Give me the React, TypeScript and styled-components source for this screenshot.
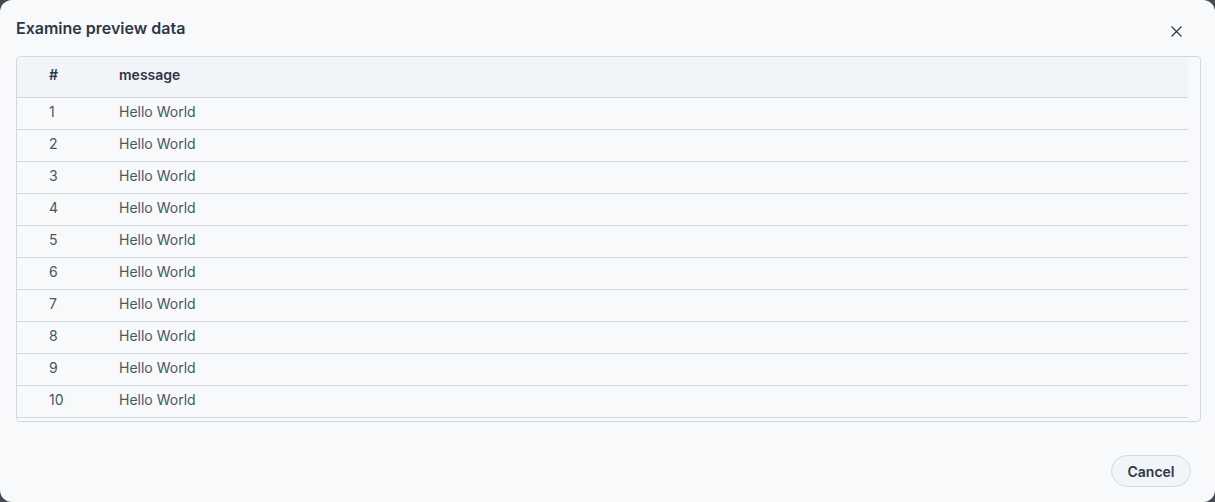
import React from 'react';
import styled, { createGlobalStyle } from 'styled-components';

const GlobalStyle = createGlobalStyle`
    html, body {
        margin: 0;
        padding: 0;
        background: #454950;
        font-family: Inter, 'Noto Sans', sans-serif;
    }
`;

const rows = Array.from({ length: 12 }, (_, i) => ({
    id: i + 1,
    message: 'Hello World',
}));

function CloseIcon(): React.ReactElement {
    return (
        <svg width="11" height="11" viewBox="0 0 11 11" fill="none">
            <path
                d="M0.5 0.5L10.5 10.5M10.5 0.5L0.5 10.5"
                stroke="#2d3748"
                strokeWidth="1.2"
            />
        </svg>
    );
}

export default function App(): React.ReactElement {
    return (
        <>
            <GlobalStyle />
            <Modal>
                <Header>
                    <Title>Examine preview data</Title>
                    <CloseButton aria-label="Close">
                        <CloseIcon />
                    </CloseButton>
                </Header>

                <TableFrame>
                    <ScrollArea>
                        <Table>
                            <thead>
                                <tr>
                                    <HeadCell $width={70}>#</HeadCell>
                                    <HeadCell>message</HeadCell>
                                </tr>
                            </thead>
                            <tbody>
                                {rows.map(row => (
                                    <tr key={row.id}>
                                        <Cell>{row.id}</Cell>
                                        <Cell>{row.message}</Cell>
                                    </tr>
                                ))}
                            </tbody>
                        </Table>
                    </ScrollArea>
                </TableFrame>

                <Footer>
                    <CancelButton>Cancel</CancelButton>
                </Footer>
            </Modal>
        </>
    );
}

const Modal = styled.div`
    width: 1215px;
    height: 502px;
    box-sizing: border-box;
    background: #f8f9fb;
    border-radius: 12px;
    display: flex;
    flex-direction: column;
    overflow: hidden;
`;

const Header = styled.div`
    height: 56px;
    display: flex;
    align-items: flex-start;
    justify-content: space-between;
    padding: 0 33px 0 16px;
`;

const Title = styled.h2`
    margin: 16px 0 0;
    font-size: 16px;
    line-height: 24px;
    font-weight: 600;
    color: #2d3748;
`;

const CloseButton = styled.button`
    margin-top: 26px;
    width: 11px;
    height: 11px;
    padding: 0;
    border: none;
    background: none;
    display: flex;
    align-items: center;
    justify-content: center;
    cursor: pointer;
`;

const TableFrame = styled.div`
    margin: 0 14px 0 16px;
    border: 1px solid #d3d8df;
    border-radius: 4px;
    overflow: hidden;
`;

const ScrollArea = styled.div`
    height: 364px;
    overflow: hidden;
    padding-right: 12px;
`;

const Table = styled.table`
    width: 100%;
    border-collapse: collapse;
    font-size: 14px;
    color: #4a5568;
`;

const HeadCell = styled.th<{ $width?: number }>`
    width: ${props => (props.$width ? `${props.$width}px` : 'auto')};
    box-sizing: border-box;
    height: 40px;
    padding: 0 0 5px 32px;
    text-align: left;
    font-weight: 600;
    color: #2d3748;
    background: #f1f4f8;
    border-bottom: 1px solid #d3d8df;
`;

const Cell = styled.td`
    height: 32px;
    box-sizing: border-box;
    padding: 0 0 2px 32px;
    line-height: 20px;
    border-bottom: 1px solid #d3d8df;
`;

const Footer = styled.div`
    display: flex;
    justify-content: flex-end;
    padding: 33px 24px 0;
`;

const CancelButton = styled.button`
    width: 80px;
    height: 32px;
    border-radius: 999px;
    border: 1px solid #d3dbe6;
    background: #f1f4f8;
    color: #2d3748;
    font-family: Inter, 'Noto Sans', sans-serif;
    font-size: 14px;
    font-weight: 600;
    cursor: pointer;
`;
